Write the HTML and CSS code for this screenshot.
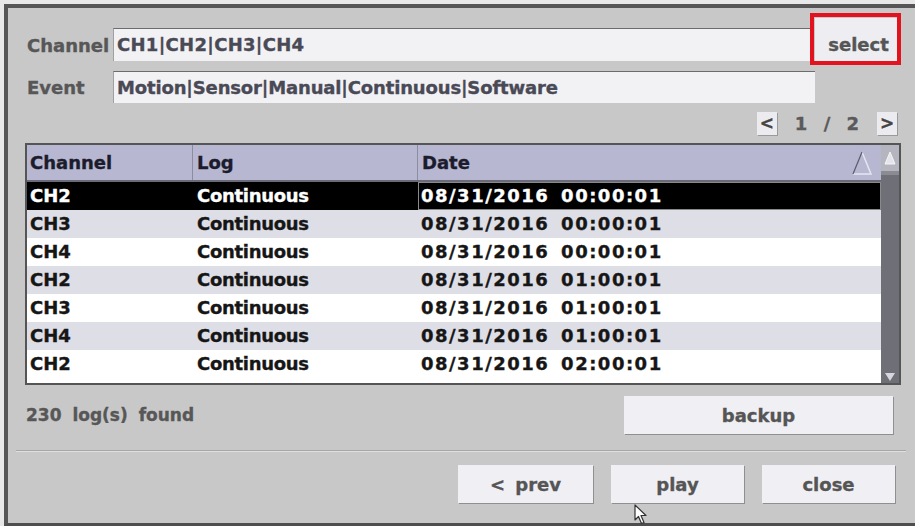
FILE: index.html
```html
<!DOCTYPE html>
<html>
<head>
<meta charset="utf-8">
<link rel="stylesheet" href="styles.css">
</head>
<body>
<div class="frame">
  <div class="row row-channel">
    <span class="label">Channel</span>
    <div class="field field-channel">CH1|CH2|CH3|CH4</div>
    <button class="btn btn-select">select</button>
  </div>
  <div class="row row-event">
    <span class="label">Event</span>
    <div class="field field-event">Motion|Sensor|Manual|Continuous|Software</div>
  </div>
  <div class="pager">
    <button class="pg-btn">&lt;</button>
    <span class="pg-text">1 / 2</span>
    <button class="pg-btn">&gt;</button>
  </div>
  <div class="table">
    <div class="list">
      <div class="thead">
        <div class="th th-sep">Channel</div>
        <div class="th th-sep">Log</div>
        <div class="th th-date">Date
          <svg class="sort" width="20" height="26" viewBox="0 0 20 26"><polyline points="1,24 19,24 10,2" fill="none" stroke="#e6e6f2" stroke-width="1.5"/><line x1="10" y1="2" x2="1" y2="24" stroke="#5a5a6a" stroke-width="1.2"/></svg>
        </div>
      </div>
      <div class="tbody">
        <div class="tr sel"><div class="td">CH2</div><div class="td">Continuous</div><div class="td date">08/31/2016 00:00:01</div></div>
        <div class="tr alt"><div class="td">CH3</div><div class="td">Continuous</div><div class="td date">08/31/2016 00:00:01</div></div>
        <div class="tr"><div class="td">CH4</div><div class="td">Continuous</div><div class="td date">08/31/2016 00:00:01</div></div>
        <div class="tr alt"><div class="td">CH2</div><div class="td">Continuous</div><div class="td date">08/31/2016 01:00:01</div></div>
        <div class="tr"><div class="td">CH3</div><div class="td">Continuous</div><div class="td date">08/31/2016 01:00:01</div></div>
        <div class="tr alt"><div class="td">CH4</div><div class="td">Continuous</div><div class="td date">08/31/2016 01:00:01</div></div>
        <div class="tr"><div class="td">CH2</div><div class="td">Continuous</div><div class="td date">08/31/2016 02:00:01</div></div>
      </div>
    </div>
    <div class="scrollbar">
      <div class="sb-up"><svg width="12" height="16" viewBox="0 0 12 16"><polygon points="6,2 1,14 11,14" fill="#e4e4ec" stroke="#f4f4f8" stroke-width="1"/></svg></div>
      <div class="sb-thumb"></div>
      <div class="sb-down"><svg width="12" height="10" viewBox="0 0 12 10"><polygon points="1,1 11,1 6,9" fill="#d6d6de"/></svg></div>
    </div>
  </div>
  <div class="footer">
    <span class="count">230 log(s) found</span>
    <button class="btn btn-backup">backup</button>
  </div>
  <div class="sep"></div>
  <div class="actions">
    <button class="btn btn-prev">&lt; prev</button>
    <button class="btn btn-play">play</button>
    <button class="btn btn-close">close</button>
  </div>
</div>
<svg class="cursor" width="18" height="22" viewBox="0 0 18 22"><path d="M1,1 L1,16 L4.5,12.5 L7.5,19.5 L10,18.5 L7,11.5 L12,11.5 Z" fill="#ffffff" stroke="#333" stroke-width="1.2" stroke-linejoin="round"/></svg>
</body>
</html>
```

FILE: styles.css
```css
html, body {
  margin: 0;
}
body {
  background: #e8e8e8;
  padding: 4px 0 0 4px;
  height: 526px;
  box-sizing: border-box;
  overflow: hidden;
  font-family: "DejaVu Sans", "Verdana", sans-serif;
  font-weight: bold;
  font-size: 18px;
  -webkit-text-stroke: 0.35px currentColor;
}
button {
  font-family: inherit;
  font-weight: bold;
  font-size: 18px;
  padding: 0;
  cursor: default;
}
.frame {
  height: 522px;
  box-sizing: border-box;
  border-top: 4px solid #565656;
  border-left: 4px solid #565656;
  border-bottom: 3px solid #4e4e4e;
  background: #c8c8c8;
  padding: 10px 14px 0 17px;
  display: flex;
  flex-direction: column;
}
.row {
  display: flex;
  align-items: flex-end;
}
.label {
  width: 88px;
  height: 33px;
  padding-left: 2px;
  padding-top: 2px;
  box-sizing: border-box;
  color: #575757;
  line-height: 31px;
}
.field {
  box-sizing: border-box;
  background: #f2f2f5;
  border-top: 1px solid #6c6c6c;
  border-left: 1px solid #a0a0a0;
  color: #4a4a56;
  padding-left: 3px;
}
.field-channel {
  width: 700px;
  height: 33px;
  line-height: 32px;
  letter-spacing: 0.3px;
}
.row-event {
  margin-top: 10px;
}
.row-event .label {
  height: 32px;
  line-height: 30px;
}
.field-event {
  width: 702px;
  height: 32px;
  line-height: 31px;
  letter-spacing: -0.15px;
}
.btn {
  background: #f0f0f4;
  border: none;
  color: #555;
  box-shadow: 1px 1px 0 #8f8f8f;
}
.btn-select {
  position: relative;
  width: 82px;
  height: 43px;
  margin-left: 2px;
  padding-top: 10px;
  padding-left: 5px;
  box-shadow: none;
  background: #eeeef2;
}
.btn-select::after {
  content: "";
  position: absolute;
  left: -5px;
  top: -5px;
  right: -4px;
  bottom: -4px;
  border: 4px solid #e2121e;
}
.pager {
  margin-top: 9px;
  margin-right: 4px;
  height: 23px;
  display: flex;
  justify-content: flex-end;
  align-items: stretch;
}
.pg-btn {
  width: 20px;
  height: 23px;
  background: #ececf0;
  color: #444;
  font-size: 17px;
  line-height: 21px;
  box-shadow: 1px 1px 0 #9a9a9a;
  border: none;
}
.pg-text {
  color: #5a5a5a;
  line-height: 23px;
  padding: 0 18px 0 18px;
  word-spacing: 10px;
}
.table {
  margin-top: 8px;
  height: 242px;
  box-sizing: border-box;
  border: 2px solid #555;
  background: #ffffff;
  display: flex;
}
.list {
  flex: 1;
  display: flex;
  flex-direction: column;
}
.thead {
  height: 37px;
  box-sizing: border-box;
  border-bottom: 2px solid #6a6a78;
  background: #b7b7d1;
  display: grid;
  grid-template-columns: 166px 225px 1fr;
  color: #1c1c2c;
}
.th {
  line-height: 35px;
  padding-left: 3px;
}
.th-sep {
  border-right: 1px solid #8c8ca2;
}
.th + .th {
  padding-left: 4px;
}
.th-date {
  display: flex;
  justify-content: space-between;
  align-items: center;
}
.sort {
  margin-right: 9px;
}
.tr {
  display: grid;
  grid-template-columns: 166px 225px 1fr;
  height: 28px;
  line-height: 28px;
  color: #161616;
}
.tr.alt {
  background: #dedee7;
}
.tr.sel {
  background: #000;
  color: #fff;
}
.td {
  padding-left: 3px;
  white-space: nowrap;
}
.td + .td {
  padding-left: 4px;
  letter-spacing: -0.3px;
}
.td.date {
  padding-left: 3px;
  letter-spacing: 1.5px;
  word-spacing: 4px;
}
.tr.sel .td.date {
  border: 1px solid #8a8a8a;
  line-height: 26px;
  padding-left: 2px;
}
.scrollbar {
  width: 18px;
  background: #6f6f78;
  display: flex;
  flex-direction: column;
}
.sb-up {
  height: 26px;
  background: #b5b5bf;
  display: flex;
  justify-content: center;
  align-items: center;
}
.sb-thumb {
  flex: 1;
  border-top: 4px solid #8b8b94;
}
.sb-down {
  height: 12px;
  display: flex;
  justify-content: center;
  align-items: center;
}
.footer {
  margin-top: 11px;
  height: 38px;
  display: flex;
  justify-content: space-between;
  align-items: center;
}
.count {
  padding-left: 1px;
  color: #575757;
  font-size: 17px;
  word-spacing: 5px;
}
.btn-backup {
  width: 269px;
  height: 38px;
  margin-right: 8px;
}
.sep {
  margin: 16px -5px 0 -9px;
  border-top: 1px solid #a6a6a6;
  border-bottom: 1px solid #e0e0e0;
}
.actions {
  margin-top: 13px;
  margin-right: 6px;
  display: flex;
  justify-content: flex-end;
  gap: 18px;
}
.actions .btn {
  height: 38px;
  width: 133px;
}
.actions .btn-prev {
  width: 135px;
  word-spacing: 4px;
}
.cursor {
  position: absolute;
  left: 634px;
  top: 504px;
  -webkit-text-stroke: 0;
}
```
